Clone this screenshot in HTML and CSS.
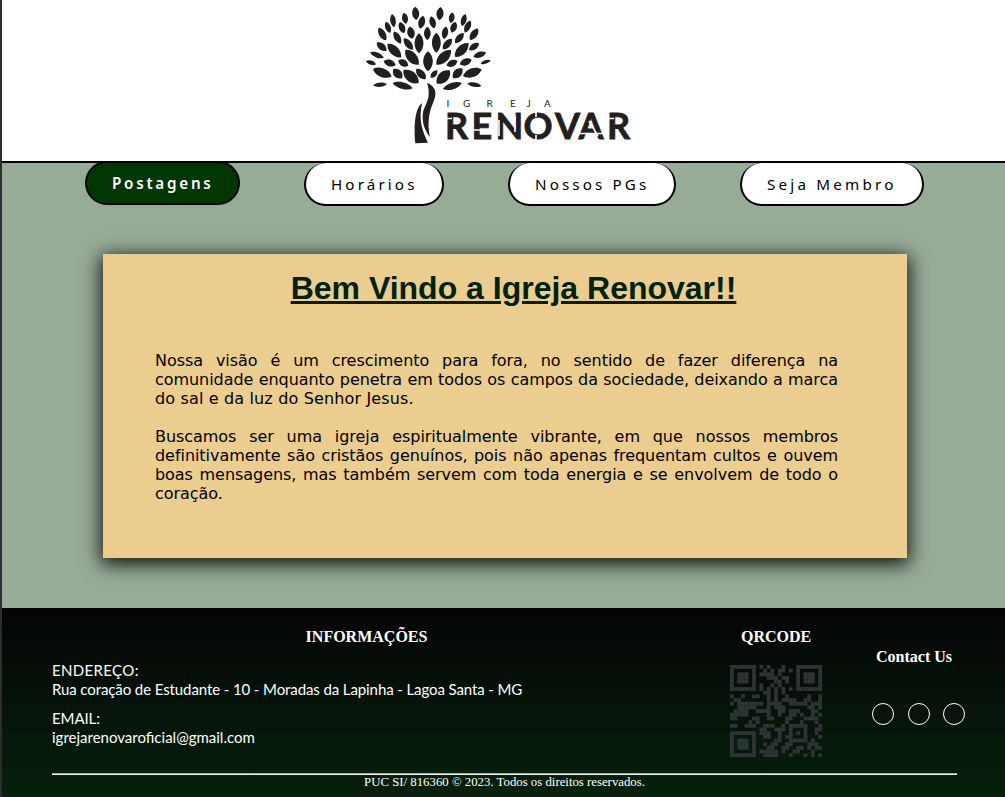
FILE: index.html
```html
<!DOCTYPE html>
<html lang="pt-BR">
<head>
<meta charset="utf-8">
<title>Igreja Renovar</title>
<link rel="stylesheet" href="styles.css">
</head>
<body>
<header class="header">
<svg class="logo" viewBox="0 0 285 150" role="img" aria-label="Igreja Renovar">
<g class="ink" id="leaves" transform="scale(.33333)"></g>
<g class="ink" transform="scale(.33333)">
<path d="M216 248C246 261 246 282 234 309C222 337 216 370 225 411C207 389 200 362 204 339C207 315 232 296 216 248Z"/>
<path d="M201 310C180 324 176 378 181 430L219 428C202 394 190 360 201 310Z"/>
</g>
<text class="small-name" x="91.5 108 131.5 155 171.5 189" y="107">IGREJA</text>
<text class="big-name" x="90 116.5 140.5 168.5 200 223.5 252" y="139" textLength="183">RENOVAR</text>
<path class="cuts" d="M89 118.500h8M118 130h19M144 120v16M160 116v16M181 110v7M181 135v7M223 133.500h27M234 121l9 15M251 118.500h8"/>
</svg>
</header>
<nav class="nav">
<a class="pill active">Postagens</a><a class="pill horarios">Horários</a><a class="pill pgs">Nossos PGs</a><a class="pill membro">Seja Membro</a>
</nav>
<main class="main">
<section class="card">
<h1 class="title">Bem Vindo a Igreja Renovar!!</h1>
<div class="copy">
<p>Nossa visão é um crescimento para fora, no sentido de fazer diferença na</p>
<p>comunidade enquanto penetra em todos os campos da sociedade, deixando a marca</p>
<p class="end wide">do sal e da luz do Senhor Jesus.</p>
<p>Buscamos ser uma igreja espiritualmente vibrante, em que nossos membros</p>
<p>definitivamente são cristãos genuínos, pois não apenas frequentam cultos e ouvem</p>
<p>boas mensagens, mas também servem com toda energia e se envolvem de todo o</p>
<p class="end">coração.</p>
</div>
</section>
</main>
<footer class="footer">
<div class="columns">
<section class="info">
<h2 class="heading center">INFORMAÇÕES</h2>
<p class="address"><span class="label">ENDEREÇO:</span><br><span class="street">Rua coração de Estudante - 10 - Moradas da Lapinha - Lagoa Santa - MG</span></p>
<p class="address"><span class="label email">EMAIL:</span><br><span class="mail">igrejarenovaroficial@gmail.com</span></p>
</section>
<section class="qr">
<h2 class="heading">QRCODE</h2>
<svg class="code" id="code" viewBox="0 0 25 25"></svg>
</section>
<section class="contact">
<h2 class="heading">Contact Us</h2>
<div class="social"><i></i><i></i><i></i></div>
</section>
</div>
<div class="rule"></div>
<p class="copyright">PUC SI/ 816360 © 2023. Todos os direitos reservados.</p>
</footer>
<script src="draw.js"></script>
</body>
</html>
```
FILE: styles.css
```css
* { box-sizing: border-box; }
body { margin: 0; width: 1005px; height: 797px; overflow: hidden; background: #97ac97; border-left: 2px solid #2d2e30; display: flex; flex-direction: column; }
h1, h2, p { margin: 0; }
.header { height: 163px; background: #fff; border-bottom: 2px solid #000; padding-left: 353px; flex: none; }
.logo { width: 285px; height: 150px; display: block; }
.ink, .small-name, .big-name { fill: #231f20; }
.small-name { font: 10px Lato, sans-serif; }
.big-name { font: 700 36px Lato, sans-serif; stroke: #231f20; stroke-width: .8; }
.cuts { stroke: #fff; stroke-width: 1.6; fill: none; }
.nav { height: 43px; display: flex; padding-left: 83px; gap: 64px; flex: none; }
.pill { height: 43px; border: 2px solid #000; border-top: 0; border-radius: 22px; background: #fff; color: #000; font: 15.2px/42px "Noto Sans", sans-serif; letter-spacing: 3.12px; padding-left: 25px; white-space: nowrap; }
.active { width: 155px; height: 44px; margin-top: -2px; border-top: 2px solid #000; background: #023602; color: #fff; font-weight: 600; line-height: 41px; letter-spacing: 2.75px; }
.horarios { width: 140px; }
.pgs { width: 168px; }
.membro { width: 184px; letter-spacing: 3.2px; }
.main { height: 402px; padding: 48px 0 0 101px; flex: none; }
.card { width: 804px; height: 304px; background: #eacd8f; box-shadow: 0 4px 18px 2px rgba(0,0,0,.9); padding: 15px 69px 0 52px; }
.title { font: 700 32px/38px "Liberation Sans", Arial, sans-serif; color: #03210f; text-align: center; text-decoration: underline; padding-left: 34px; white-space: nowrap; }
.copy { padding-top: 44px; font: 16px/19px Verdana, "DejaVu Sans", sans-serif; color: #000; }
.copy p { height: 19px; text-align: justify; text-align-last: justify; letter-spacing: -.05px; }
.copy .end { text-align-last: left; height: 38px; }
.copy .wide { letter-spacing: .15px; }
.footer { height: 189px; padding: 19px 48px 0 50px; background: linear-gradient(#050505, #06210c); color: #fff; font-family: "Liberation Serif", serif; flex: none; }
.columns { display: flex; height: 146px; }
.info { width: 629px; flex: none; }
.heading { font: 700 16px/19px "Liberation Serif", serif; }
.center { text-align: center; }
.address { font: 15px/19px "Gill Sans", Lato, sans-serif; letter-spacing: -.1px; margin-top: 10px; white-space: nowrap; }
.center + .address { margin-top: 15px; }
.label { letter-spacing: .35px; }
.email { letter-spacing: -.1px; }
.mail { letter-spacing: 0; }
.qr { width: 190px; padding-left: 60px; flex: none; }
.code { display: block; width: 92px; height: 92px; margin: 19px 0 0 -11px; fill: #303437; }
.contact { flex: none; padding: 20px 0 0 5px; }
.social { display: flex; gap: 13.5px; margin: 37px 0 0 -4px; }
.social i { width: 22px; height: 22px; border: 1px solid #fff; border-radius: 50%; flex: none; }
.rule { height: 2px; border-top: 1px solid #aaa; border-bottom: 1px solid #eee; }
.copyright { text-align: center; font-size: 12.8px; line-height: 14px; }
```
FILE: draw.js
```js
// Leaves: centre x, centre y, length, width, rotation
const leaves = [
[182,40,40,19,-5],[150,55,34,16,-10],[114,62,40,15,-8],[99,82,36,15,-20],[82,102,44,18,-30],[200,67,40,18,14],[233,67,38,17,-14],
[255,41,40,19,5],[290,53,32,15,10],[326,60,38,15,15],[338,80,40,16,25],[357,103,42,18,35],[141,83,36,17,-20],[168,98,38,20,-12],
[217,100,40,18,0],[270,98,38,17,10],[296,82,34,17,20],[127,113,42,17,-30],[313,114,40,17,40],[192,130,60,24,0],[244,128,60,24,0],
[160,132,44,18,-38],[277,132,42,18,40],[80,140,38,18,-50],[357,140,36,16,55],[118,152,58,24,-45],[320,150,58,24,45],[66,165,44,14,-68],
[374,164,40,16,72],[171,172,60,26,-42],[266,172,62,26,45],[219,184,60,26,0],[48,188,32,12,-72],[104,189,38,18,-72],[145,189,34,18,-60],
[291,190,36,18,65],[332,186,38,18,68],[392,186,32,10,72],[82,218,60,24,-68],[128,221,38,22,-45],[352,218,60,24,70],[308,220,40,22,45],
[168,230,60,28,-50],[265,231,56,28,45],[198,222,42,20,-42],[237,222,30,14,40],[75,254,42,12,85],[143,257,62,18,-75],[358,254,42,12,-80],[292,258,60,18,72]];
document.getElementById('leaves').innerHTML = leaves.map(([x, y, h, w, r]) =>
  `<path transform="translate(${x} ${y}) rotate(${r})" d="M0 ${-h / 2}C${w * .74} ${-h * .26} ${w * .74} ${h * .26} 0 ${h / 2}C${-w * .74} ${h * .26} ${-w * .74} ${-h * .26} 0 ${-h / 2}Z"/>`).join('');
const rows = [
'1111111010100010001111111','1000001001010110101000001','1011101011110100001011101','1011101000111011001011101','1011101000001101001011101',
'1000001010010100001000001','1111111010101010101111111','0000000001101010000000000','1001001100101001000001001','0110000000101011110011001',
'1011111110111100111110111','0011111000101110000001101','0111100111100110111000110','1111100000100100110100101','1100001100110001100011110',
'0000010100000001000100010','1100111001110010111110001','0000000011001110100010011','1111111011100100101010010','1000001001100101100010001',
'1011101000001100111110100','1011101001011001100001110','1011101000110011001101011','1000001011111010011000100','1111111001111000100010101'];
document.getElementById('code').innerHTML = rows.map((row, y) =>
  [...row].map((v, x) => v === '1' ? `<rect x="${x}" y="${y}" width="1.03" height="1.03"/>` : '').join('')).join('');
```
